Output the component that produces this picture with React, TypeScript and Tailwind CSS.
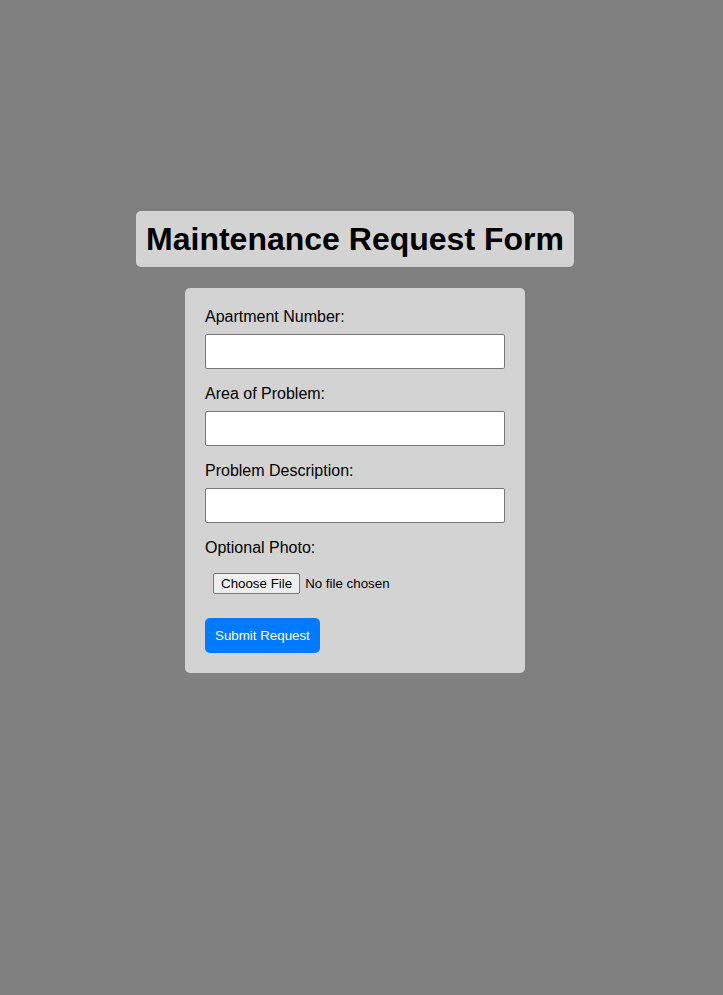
export default function App() {
  const fields = ['Apartment Number:', 'Area of Problem:', 'Problem Description:'];

  return (
    <div
      className="min-h-screen bg-[#808080] pr-[13px] pt-[211px]"
      style={{ fontFamily: '"Liberation Sans", Arial, sans-serif' }}
    >
      <div className="flex flex-col items-center">
        <h1 className="mb-[21px] rounded-[5px] bg-[#d3d3d3] px-[10px] py-[10px] text-[32px] font-bold leading-[36px] text-black">
          Maintenance Request Form
        </h1>

        <form
          className="flex w-[340px] flex-col rounded-[5px] bg-[#d3d3d3] p-[20px] text-black"
          onSubmit={(e) => e.preventDefault()}
        >
          {fields.map((label) => (
            <div key={label} className="flex flex-col">
              <label className="mb-[8px] block h-[18px] text-[16px] leading-[18px]">{label}</label>
              <input
                type="text"
                className="mb-[16px] h-[35px] w-full rounded-[2px] border border-[#767676] bg-white px-[8px] text-[13.33px]"
              />
            </div>
          ))}

          <label className="mb-[8px] block h-[18px] text-[16px] leading-[18px]">Optional Photo:</label>
          <input
            type="file"
            className="mb-[16px] h-[37px] w-full p-[8px] text-[13.33px] leading-[15px] file:mr-[5px] file:h-[21px] file:rounded-[2px] file:border file:border-[#767676] file:bg-[#efefef] file:px-[7px] file:py-[2px] file:text-[13.33px]"
          />

          <div>
            <button
              type="submit"
              className="rounded-[5px] bg-[#007bff] px-[10px] py-[10px] text-[13.33px] leading-[15px] text-white"
            >
              Submit Request
            </button>
          </div>
        </form>
      </div>
    </div>
  );
}
